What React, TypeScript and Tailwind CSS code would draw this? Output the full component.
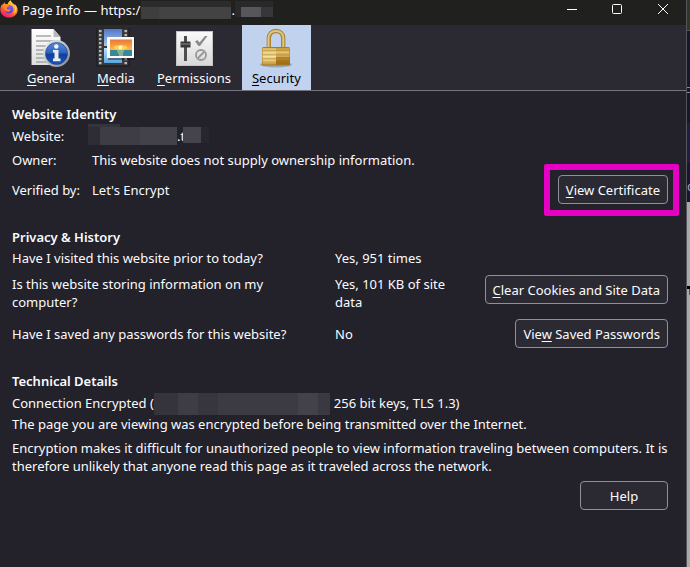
import { useState, type ReactNode } from "react";

function FirefoxIcon() {
  return (
    <svg width="18" height="18" viewBox="0 0 18 18" aria-hidden="true">
      <defs>
        <linearGradient id="fx-flame" x1="0.8" y1="0" x2="0.25" y2="1">
          <stop offset="0" stopColor="#fff04a" />
          <stop offset="0.35" stopColor="#ffa52c" />
          <stop offset="0.7" stopColor="#ff4f3a" />
          <stop offset="1" stopColor="#e3157f" />
        </linearGradient>
        <linearGradient id="fx-globe" x1="0" y1="0" x2="0" y2="1">
          <stop offset="0" stopColor="#9059ff" />
          <stop offset="1" stopColor="#5b3fc4" />
        </linearGradient>
      </defs>
      <path
        d="M10.8 0.2c.2 1.6 1.5 2.4 2.7 3.5.6.6 1 1.1 1.3 1.8.1-.6 0-1.1-.2-1.6 2 1.5 3 3.6 3 5.8 0 4.6-3.5 7.8-8.5 7.8C4 17.500.3 14.100.3 9.700c0-2.300.8-4.200 2-5.700 0 .5 0 .9.2 1.200C3.100 4.200 3.600 3 4.700 2.200c-.1.8.1 1.300.5 1.900.9-.2 1.700-.1 2.500.1C8 2.600 9 1.100 10.800.2Z"
        fill="url(#fx-flame)"
      />
      <circle cx="9" cy="9.3" r="4.3" fill="url(#fx-globe)" />
      <path
        d="M2.600 5.200c1.200-.8 2.700-1 4-.4.9.5 1.600.9 2.700 1-.2.900-1.200 1.100-2.100 1.500-.6.3-.6 1-.3 1.600.8 1.200 2.600.4 3.800.6-.5 1.600-2.100 2.300-3.600 2-1.500-.3-2.600-1.500-3-3Z"
        fill="#ff8a24"
      />
      <path d="M14 5.500c1.700 2.700 1.500 6.200-.8 8.200 2.900-.8 4.100-4.800 2.300-7.700Z" fill="#ffd83d" />
    </svg>
  );
}

function GeneralIcon() {
  return (
    <svg width="40" height="40" viewBox="0 0 40 40" aria-hidden="true">
      <defs>
        <linearGradient id="gen-page" x1="0" y1="0" x2="0" y2="1">
          <stop offset="0" stopColor="#ffffff" />
          <stop offset="1" stopColor="#dedede" />
        </linearGradient>
        <linearGradient id="gen-ring" x1="0" y1="0" x2="1" y2="1">
          <stop offset="0" stopColor="#f4f4f4" />
          <stop offset="1" stopColor="#7f858e" />
        </linearGradient>
        <linearGradient id="gen-blue" x1="0" y1="0" x2="0" y2="1">
          <stop offset="0" stopColor="#5b8bd8" />
          <stop offset="0.48" stopColor="#2c62bd" />
          <stop offset="0.52" stopColor="#0c3f9f" />
          <stop offset="1" stopColor="#1c56b8" />
        </linearGradient>
      </defs>
      <path d="M0.500 1h22l7 8v28h-29Z" fill="url(#gen-page)" />
      <path d="M22.500 1v8h7Z" fill="#b9b9b9" />
      <path
        d="M5 8h15M5 13h20M5 18h12M5 22h9M5 26h8M5 30h9M5 34h11"
        stroke="#a5a5a5"
        strokeWidth="1.3"
      />
      <circle cx="25.500" cy="25.500" r="13.500" fill="url(#gen-ring)" />
      <circle cx="25.500" cy="25.500" r="11" fill="url(#gen-blue)" stroke="#12377e" strokeWidth="0.6" />
      <circle cx="25.300" cy="18.500" r="2.200" fill="#f5f5f5" />
      <path d="M22 22h5.500v8.500h2V33.200h-7.500v-2.700h1.500v-6h-1.500Z" fill="#ececec" />
    </svg>
  );
}

function MediaIcon() {
  const holes = [2, 6, 10, 14, 18, 22, 26, 30, 34];
  return (
    <svg width="40" height="40" viewBox="0 0 40 40" aria-hidden="true">
      <defs>
        <linearGradient id="med-sky" x1="0" y1="0" x2="0" y2="1">
          <stop offset="0" stopColor="#5279c9" />
          <stop offset="1" stopColor="#a5c3ee" />
        </linearGradient>
        <linearGradient id="med-low" x1="0" y1="0" x2="0" y2="1">
          <stop offset="0" stopColor="#bfdcf5" />
          <stop offset="1" stopColor="#5ba6df" />
        </linearGradient>
        <linearGradient id="med-sun" x1="0" y1="0" x2="0" y2="1">
          <stop offset="0" stopColor="#e8793a" />
          <stop offset="1" stopColor="#ffb844" />
        </linearGradient>
      </defs>
      <rect x="1" y="0" width="32" height="38" fill="#3a3a3a" stroke="#161616" />
      <rect x="8" y="1" width="18" height="17" fill="url(#med-sky)" />
      <rect x="8" y="20" width="18" height="15" fill="url(#med-low)" />
      {holes.map((y) => (
        <g key={y} fill="#b9b9b9">
          <rect x="3" y={y} width="2.500" height="2.200" />
          <rect x="28.500" y={y} width="2.500" height="2.200" />
        </g>
      ))}
      <rect x="12" y="11" width="27" height="21" fill="#111" opacity="0.450" />
      <rect x="11" y="9" width="27" height="21" fill="#fafafa" />
      <rect x="14" y="11.500" width="22" height="10.500" fill="url(#med-sun)" />
      <ellipse cx="24.500" cy="19.500" rx="7" ry="2.500" fill="#ffd858" opacity="0.800" />
      <circle cx="24.500" cy="19.500" r="2" fill="#fffbd0" />
      <rect x="14" y="22" width="22" height="6" fill="#38889a" />
      <path d="M21 23h7M22 25h5M23 27h4" stroke="#d9d58a" strokeWidth="1" />
    </svg>
  );
}

function PermissionsIcon() {
  return (
    <svg width="40" height="40" viewBox="0 0 40 40" aria-hidden="true">
      <defs>
        <linearGradient id="perm-bg" x1="0" y1="0" x2="0" y2="1">
          <stop offset="0" stopColor="#fafafa" />
          <stop offset="1" stopColor="#d8d8d8" />
        </linearGradient>
      </defs>
      <rect x="2.500" y="3.500" width="36" height="34" fill="url(#perm-bg)" stroke="#c4c4c4" />
      <rect x="10" y="8" width="3" height="25" fill="#4d4d4d" />
      <rect x="6.500" y="13.500" width="10" height="6" rx="0.500" fill="#383838" />
      <path d="M6.500 16h10" stroke="#8b8b8b" />
      <path d="m21 13.500 2.500-1.500 2 2.500 5.500-6.500h2.500l-7.500 10h-1.500Z" fill="#8c8c8c" />
      <circle cx="27" cy="27" r="5" fill="none" stroke="#989898" strokeWidth="1.800" />
      <path d="m24 30 6-6" stroke="#989898" strokeWidth="1.800" />
    </svg>
  );
}

function SecurityIcon() {
  return (
    <svg width="40" height="40" viewBox="0 0 40 40" aria-hidden="true">
      <defs>
        <linearGradient id="sec-left" x1="0" y1="0" x2="0" y2="1">
          <stop offset="0" stopColor="#d9b962" />
          <stop offset="0.500" stopColor="#f2dc98" />
          <stop offset="1" stopColor="#c59a35" />
        </linearGradient>
        <linearGradient id="sec-right" x1="0" y1="0" x2="0" y2="1">
          <stop offset="0" stopColor="#c89c3d" />
          <stop offset="0.500" stopColor="#e1bd65" />
          <stop offset="0.550" stopColor="#b18122" />
          <stop offset="1" stopColor="#9d6c12" />
        </linearGradient>
      </defs>
      <ellipse cx="20" cy="36.500" rx="16" ry="3" fill="#6f7890" opacity="0.500" />
      <path d="M12.800 20V10.500c0-4.500 3-7.500 7.200-7.500s7.200 3 7.200 7.500V20" fill="none" stroke="#a68236" strokeWidth="4.300" />
      <path d="M12.500 20V10.500c0-4.500 3-7.500 7.500-7.500s7.300 3 7.300 7.500V20" fill="none" stroke="#e0c782" strokeWidth="2" />
      <rect x="6" y="19" width="28" height="18.500" rx="1.500" fill="#a97b25" />
      <path d="M6.500 20H20v16.500H6.500Z" fill="url(#sec-left)" />
      <path d="M20 20h13.500v16.500H20Z" fill="url(#sec-right)" />
      <path d="M7 23h26M7 27h26M7 31h26" stroke="#b48c37" strokeWidth="1" />
      <path d="M7 24h26M7 28h13M7 32h13" stroke="#ffeeb5" strokeWidth="0.700" />
    </svg>
  );
}

const tabs = [
  { id: "general", accessKey: "G", rest: "eneral", icon: <GeneralIcon /> },
  { id: "media", accessKey: "M", rest: "edia", icon: <MediaIcon /> },
  { id: "permissions", accessKey: "P", rest: "ermissions", icon: <PermissionsIcon /> },
  { id: "security", accessKey: "S", rest: "ecurity", icon: <SecurityIcon /> },
];

function Key({ children }: { children: ReactNode }) {
  return <span className="underline underline-offset-2">{children}</span>;
}

function DialogButton({ children, className = "" }: { children: ReactNode; className?: string }) {
  return (
    <button
      className={`h-[29px] shrink-0 whitespace-nowrap rounded border border-[#8f8f9d] bg-[#2b2a33] px-[7px] hover:bg-[#42414d] ${className}`}
    >
      {children}
    </button>
  );
}

function TitleBar() {
  return (
    <header className="flex h-[25px] items-center justify-between bg-[#20201e]">
      <div className="flex h-full items-start">
        <FirefoxIcon />
        <h1 className="ml-1 mr-px whitespace-nowrap pt-px">Page Info — https:/</h1>
        <span className="mt-px flex h-[18px] w-[90px] flex-col">
          <span className="h-[6px] bg-[#2b2b2b]" />
          <span className="flex flex-1">
            <span className="w-[18px] bg-[#3e3e3e]" />
            <span className="flex-1 bg-[#434343]" />
          </span>
        </span>
        <span className="pt-px">.</span>
        <span className="mt-px flex h-4 w-[38px] flex-col bg-[#292929]">
          <span className="h-[6px]" />
          <span className="flex flex-1">
            <span className="w-[6px]" />
            <span className="w-5 bg-[#56575c]" />
            <span className="flex-1 bg-[#37373a]" />
          </span>
        </span>
      </div>
      <div className="flex h-full items-start">
        <button aria-label="Minimize" className="flex h-[18px] w-[45px] items-center justify-center">
          <svg width="10" height="10" viewBox="0 0 10 10">
            <path d="M0 5.500h10" stroke="#fff" />
          </svg>
        </button>
        <button aria-label="Maximize" className="flex h-[18px] w-[45px] items-center justify-center">
          <svg width="10" height="10" viewBox="0 0 10 10">
            <rect x="0.500" y="0.500" width="9" height="9" rx="1" fill="none" stroke="#fff" />
          </svg>
        </button>
        <button aria-label="Close" className="flex h-[18px] w-[47px] items-center justify-center">
          <svg width="10" height="10" viewBox="0 0 10 10">
            <path d="m0 0 10 10M10 0 0 10" stroke="#fff" />
          </svg>
        </button>
      </div>
    </header>
  );
}

// Sliver of the browser window that sits behind the dialog
function BackgroundWindow() {
  return (
    <div aria-hidden="true" className="flex w-1 shrink-0 flex-col overflow-hidden border-l border-[#55545a]">
      <div className="h-[31px] border-b border-[#55554c] bg-[#33332f]" />
      <div className="h-[56px] bg-[#1b1430]" />
      <div className="h-[6px] border-y border-[#8b859b] bg-[#1b1430]" />
      <div className="h-[30px] bg-[#1b1430]" />
      <div className="h-[40px] bg-[#231a48]" />
      <div className="h-[39px] bg-[#1b1236] pt-[14px] text-[#a9a5b5]">c</div>
      <div className="flex-1 bg-[#aaa8a8] pt-[84px]">
        <div className="h-[3px] bg-black" />
        <div className="ml-[2px] h-[6px] bg-[#555]" />
      </div>
    </div>
  );
}

export default function App() {
  const [active, setActive] = useState("security");

  return (
    <div className="flex min-h-screen bg-[#23222b] font-['Noto_Sans','Open_Sans',sans-serif] text-[13px] leading-[18px] text-[#fbfbfe]">
      <div className="min-w-0 flex-1">
        <TitleBar />

        <nav className="flex gap-px border-b border-[#75747e] bg-[#2b2a33] pl-[17px]">
          {tabs.map((tab) => (
            <button
              key={tab.id}
              onClick={() => setActive(tab.id)}
              aria-pressed={active === tab.id}
              className={`flex h-[65px] flex-col items-center gap-px px-[10px] pt-[3px] ${
                active === tab.id ? "bg-[#c1d2ee] text-black" : ""
              }`}
            >
              {tab.icon}
              <span>
                <Key>{tab.accessKey}</Key>
                {tab.rest}
              </span>
            </button>
          ))}
        </nav>

        <main className="flex flex-col gap-6 py-[14px] pl-3 pr-[18px]">
          <section>
            <h2 className="font-semibold">Website Identity</h2>
            <dl className="mt-1 flex flex-col gap-[6px]">
              <div className="flex">
                <dt className="w-20">Website:</dt>
                <dd className="-ml-1 flex">
                  <span className="-mt-[3px] flex h-[21px] w-[89px] flex-col">
                    <span className="h-[3px] w-8 bg-[#35343d]" />
                    <span className="flex flex-1">
                      <span className="w-3 bg-[#2e2d36]" />
                      <span className="w-10 bg-[#3e3d46]" />
                      <span className="flex-1 bg-[#43424b]" />
                    </span>
                  </span>
                  .t
                  <span className="-ml-0.5 flex h-4 w-[26px]">
                    <span className="w-[18px] bg-[#45444d]" />
                    <span className="flex-1 bg-[#27262f]" />
                  </span>
                </dd>
              </div>
              <div className="flex">
                <dt className="w-20">Owner:</dt>
                <dd>This website does not supply ownership information.</dd>
              </div>
              <div className="flex items-center">
                <dt className="w-20">Verified by:</dt>
                <dd className="flex-1">Let's Encrypt</dd>
                <dd className="relative">
                  <DialogButton>
                    <Key>V</Key>iew Certificate
                  </DialogButton>
                  <span className="pointer-events-none absolute -bottom-3 -left-[14px] -right-[11px] -top-[11px] rounded-xs border-[6px] border-[#e600c4]" />
                </dd>
              </div>
            </dl>
          </section>

          <section>
            <h2 className="font-semibold">Privacy &amp; History</h2>
            <dl className="mt-[3px] flex flex-col gap-2">
              <div className="grid grid-cols-[311px_1fr] gap-3">
                <dt>Have I visited this website prior to today?</dt>
                <dd>Yes, 951 times</dd>
              </div>
              <div className="grid grid-cols-[311px_1fr_auto] items-center gap-3">
                <dt>Is this website storing information on my computer?</dt>
                <dd>Yes, 101 KB of site data</dd>
                <dd className="self-start">
                  <DialogButton>
                    <Key>C</Key>lear Cookies and Site Data
                  </DialogButton>
                </dd>
              </div>
              <div className="grid grid-cols-[311px_1fr_auto] items-center gap-3">
                <dt>Have I saved any passwords for this website?</dt>
                <dd>No</dd>
                <dd>
                  <DialogButton>
                    Vie<Key>w</Key> Saved Passwords
                  </DialogButton>
                </dd>
              </div>
            </dl>
          </section>

          <section>
            <h2 className="font-semibold">Technical Details</h2>
            <p className="mt-1 flex h-[21px]">
              Connection Encrypted (
              <span className="-mt-px mr-1 flex h-[22px] w-44 bg-[#3a3942]">
                <span className="w-6 bg-[#35343d]" />
                <span className="w-5 bg-[#3e3d46]" />
                <span className="w-5 bg-[#37363f]" />
                <span className="w-20 bg-[#3c3b44]" />
                <span className="w-5 bg-[#43424b]" />
              </span>
              256 bit keys, TLS 1.3)
            </p>
            <p>The page you are viewing was encrypted before being transmitted over the Internet.</p>
            <p className="mt-[6px]">
              Encryption makes it difficult for unauthorized people to view information traveling between computers. It is
              therefore unlikely that anyone read this page as it traveled across the network.
            </p>
            <div className="mt-[6px] flex justify-end">
              <DialogButton className="w-[88px]">Help</DialogButton>
            </div>
          </section>
        </main>
      </div>
      <BackgroundWindow />
    </div>
  );
}
